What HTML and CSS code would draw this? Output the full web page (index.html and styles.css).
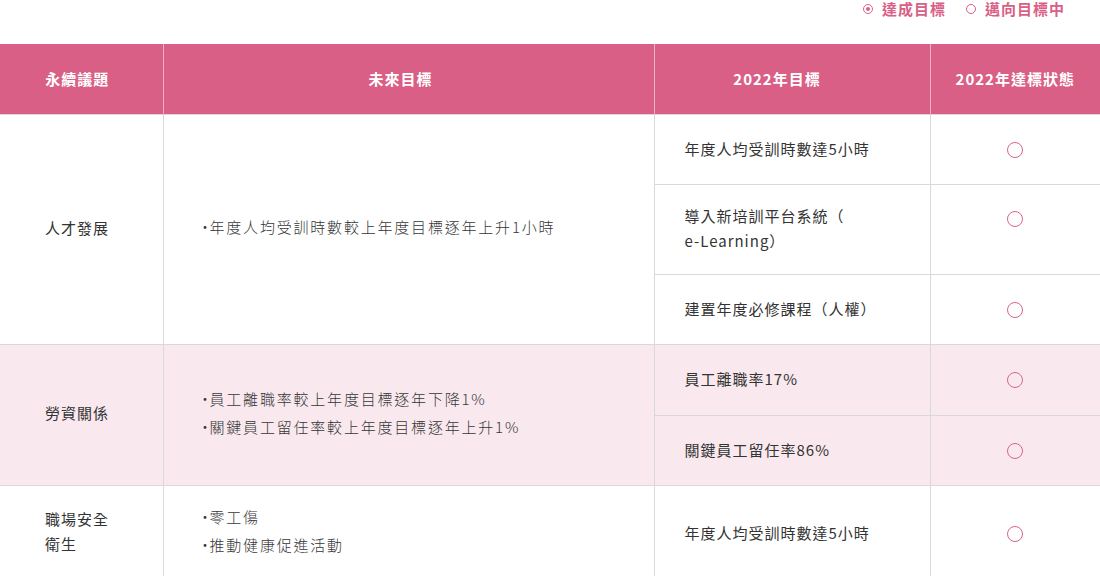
FILE: index.html
```html
<!DOCTYPE html>
<html lang="zh-Hant">
<head>
<meta charset="utf-8">
<link rel="stylesheet" href="styles.css">
</head>
<body>
<div class="legend">
  <span class="legend-item"><span class="radio radio-on"></span>達成目標</span>
  <span class="legend-item"><span class="radio"></span>邁向目標中</span>
</div>
<table class="goals">
  <colgroup>
    <col class="c1"><col class="c2"><col class="c3"><col class="c4">
  </colgroup>
  <thead>
    <tr>
      <th class="h1">永續議題</th>
      <th class="h2">未來目標</th>
      <th class="h3">2022年目標</th>
      <th class="h4">2022年達標狀態</th>
    </tr>
  </thead>
  <tbody>
    <tr>
      <td class="topic" rowspan="3">人才發展</td>
      <td class="future" rowspan="3"><ul><li>年度人均受訓時數較上年度目標逐年上升1小時</li></ul></td>
      <td class="target">年度人均受訓時數達5小時</td>
      <td class="status"><span class="ring"></span></td>
    </tr>
    <tr>
      <td class="target two">導入新培訓平台系統（<br>e-Learning）</td>
      <td class="status top"><span class="ring"></span></td>
    </tr>
    <tr>
      <td class="target">建置年度必修課程（人權）</td>
      <td class="status"><span class="ring"></span></td>
    </tr>
    <tr class="pink">
      <td class="topic" rowspan="2">勞資關係</td>
      <td class="future" rowspan="2"><ul><li>員工離職率較上年度目標逐年下降1%</li><li>關鍵員工留任率較上年度目標逐年上升1%</li></ul></td>
      <td class="target tall">員工離職率17%</td>
      <td class="status"><span class="ring"></span></td>
    </tr>
    <tr class="pink">
      <td class="target">關鍵員工留任率86%</td>
      <td class="status"><span class="ring"></span></td>
    </tr>
    <tr>
      <td class="topic">職場安全<br>衛生</td>
      <td class="future"><ul><li>零工傷</li><li>推動健康促進活動</li></ul></td>
      <td class="target">年度人均受訓時數達5小時</td>
      <td class="status"><span class="ring"></span></td>
    </tr>
  </tbody>
</table>
</body>
</html>
```

FILE: styles.css
```css
html, body {
  margin: 0;
  padding: 0;
  background: #ffffff;
}
body {
  font-family: "Noto Sans CJK TC", "Noto Sans", sans-serif;
  color: #333333;
  width: 1100px;
  overflow: hidden;
}
.legend {
  display: flex;
  justify-content: flex-end;
  gap: 20px;
  height: 17px;
  line-height: 17px;
  padding-right: 35px;
  margin-bottom: 27px;
  color: #d95f86;
  font-size: 15px;
  font-weight: 600;
  letter-spacing: 1px;
}
.legend-item {
  display: flex;
  align-items: center;
}
.radio {
  width: 10px;
  height: 10px;
  box-sizing: border-box;
  border: 1.5px solid #d95f86;
  border-radius: 50%;
  margin-right: 9px;
  position: relative;
}
.radio-on::after {
  content: "";
  position: absolute;
  left: 50%;
  top: 50%;
  width: 4px;
  height: 4px;
  margin: -2px 0 0 -2px;
  border-radius: 50%;
  background: #d95f86;
}
.goals {
  width: 1100px;
  border-collapse: collapse;
  table-layout: fixed;
  font-size: 15px;
  letter-spacing: 1px;
}
.c1 { width: 163px; }
.c2 { width: 491px; }
.c3 { width: 276px; }
.c4 { width: 170px; }
.goals th {
  background: #d95f86;
  color: #ffffff;
  font-weight: 700;
  height: 68px;
  padding: 0 0 2px;
  text-align: center;
  vertical-align: middle;
  border-left: 1px solid #ecb3c6;
}
.goals th:first-child { border-left: none; }
.goals th.h1 { padding-right: 8px; }
.goals th.h2 { padding-right: 16px; }
.goals th.h3 { padding-right: 30px; }
.goals th.h4 { padding-right: 0; }
.goals td {
  border: 1px solid #d9d9d9;
  padding: 18px 30px 21px;
  line-height: 25px;
  height: 30px;
  vertical-align: middle;
}
.goals td.two {
  padding-bottom: 21px;
}
.goals td.tall {
  padding-bottom: 22px;
}
.goals td:first-child { border-left: none; }
.goals td:last-child { border-right: none; }
.goals tr.pink td { background: #f9e9ef; }
.goals td.topic {
  padding: 17px 10px 22px 45px;
}
.goals td.future {
  padding: 17px 20px 22px 34px;
  font-weight: 300;
  letter-spacing: 1.8px;
  color: #363636;
}
.future ul {
  list-style: none;
  margin: 0;
  padding: 0;
}
.future li {
  line-height: 28px;
  display: flex;
}
.future li::before {
  content: "·";
  width: 12px;
  flex: none;
  letter-spacing: 0;
}
.goals td.status {
  padding: 0;
}
.goals td.status.top {
  vertical-align: top;
  padding-top: 26px;
}
.ring {
  display: block;
  margin: 0 auto;
  width: 16px;
  height: 16px;
  box-sizing: border-box;
  border: 1px solid #d9648b;
  border-radius: 50%;
}
```
